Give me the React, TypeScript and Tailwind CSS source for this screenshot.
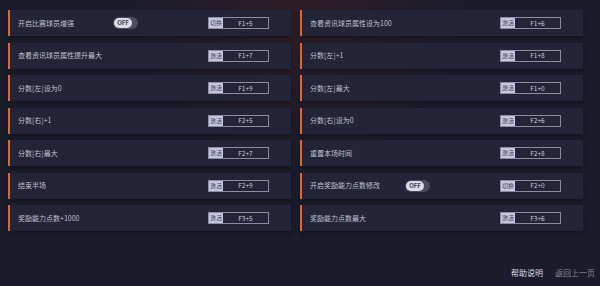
import React from "react";

type Row = { label: string; kind: "切换" | "激活"; keys: string; toggle?: boolean };

const rows: Row[] = [
  { label: "开启比赛球员增强", kind: "切换", keys: "F1+5", toggle: true },
  { label: "查看资讯球员属性设为100", kind: "激活", keys: "F1+6" },
  { label: "查看资讯球员属性提升最大", kind: "激活", keys: "F1+7" },
  { label: "分数[左]+1", kind: "激活", keys: "F1+8" },
  { label: "分数[左]设为0", kind: "激活", keys: "F1+9" },
  { label: "分数[左]最大", kind: "激活", keys: "F1+0" },
  { label: "分数[右]+1", kind: "激活", keys: "F2+5" },
  { label: "分数[右]设为0", kind: "激活", keys: "F2+6" },
  { label: "分数[右]最大", kind: "激活", keys: "F2+7" },
  { label: "重置本场时间", kind: "激活", keys: "F2+8" },
  { label: "结束半场", kind: "激活", keys: "F2+9" },
  { label: "开启奖励能力点数修改", kind: "切换", keys: "F2+0", toggle: true },
  { label: "奖励能力点数+1000", kind: "激活", keys: "F3+5" },
  { label: "奖励能力点数最大", kind: "激活", keys: "F3+6" },
];

function Toggle() {
  return (
    <div className="flex h-[12px] w-[25px] shrink-0 items-center rounded-full bg-[#4a4c5c] px-[1px]">
      <div className="flex h-[10px] w-[18px] items-center justify-center rounded-full bg-[#d9dbe5] text-[6px] font-bold leading-none text-[#3b3d50]">
        OFF
      </div>
    </div>
  );
}

function HotkeyButton({ kind, keys }: { kind: string; keys: string }) {
  return (
    <div className="ml-auto flex h-[12px] w-[61px] shrink-0 border border-[#8a8ca4]">
      <div className="flex w-[14px] items-center justify-center bg-[#c6c8e2] text-[6px] leading-none text-[#3a3c56]">
        {kind}
      </div>
      <div className="flex flex-1 items-center justify-center text-[6.5px] leading-none text-[#c9cbd8]">
        {keys}
      </div>
    </div>
  );
}

export default function App() {
  return (
    <div
      className="flex h-[286px] w-[600px] flex-col overflow-hidden bg-[#1b1c2b] bg-[radial-gradient(ellipse_at_50%_0%,#2e1c26_0%,#1b1c2b_40%)]"
      style={{ fontFamily: '"Noto Sans CJK SC", "Noto Sans", sans-serif' }}
    >
      <div className="grid grid-cols-[283px_283px] gap-x-[9px] gap-y-[6.5px] pl-[8px] pt-[10px]">
        {rows.map((r) => (
          <div
            key={r.label}
            className="flex h-[26px] items-center border-l-[2px] border-[#e4652c] bg-[#232437] pl-[8px] pr-[22px] shadow-[0_3px_4px_rgba(0,0,0,0.25)]"
          >
            <span className="w-[95px] shrink-0 whitespace-nowrap text-[7px] text-[#bfc1d0]">{r.label}</span>
            {r.toggle && <Toggle />}
            <HotkeyButton kind={r.kind} keys={r.keys} />
          </div>
        ))}
      </div>
      <div className="mt-auto flex justify-end gap-[12px] pb-[7px] pr-[5px] text-[8px]">
        <span className="text-[#dcdee8]">帮助说明</span>
        <span className="text-[#85879a]">返回上一页</span>
      </div>
    </div>
  );
}
